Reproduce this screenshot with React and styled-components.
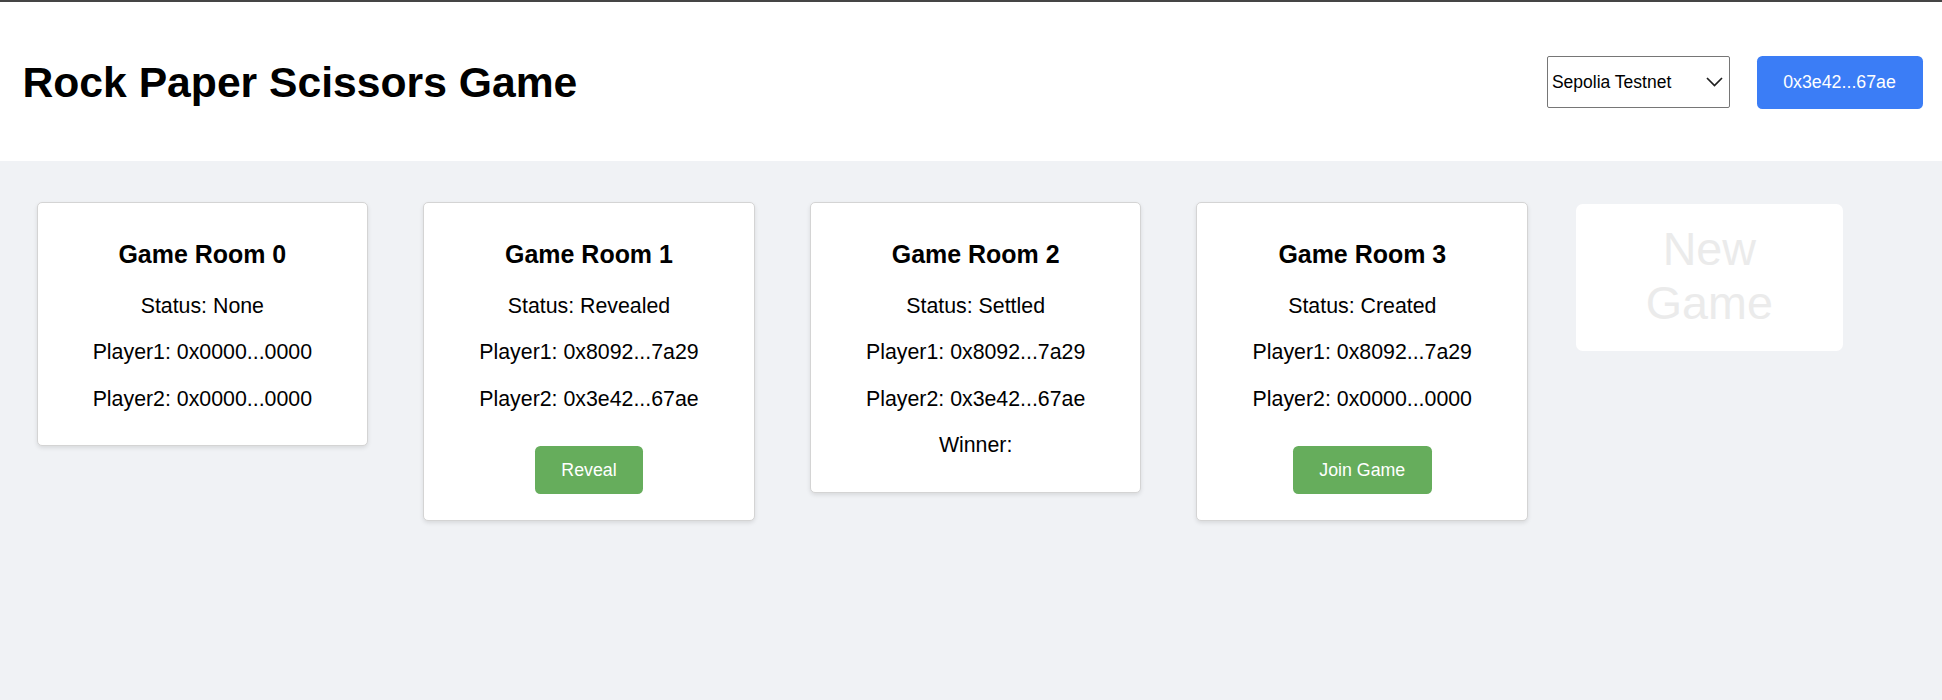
import styled, { createGlobalStyle } from "styled-components";

const GlobalStyle = createGlobalStyle`
  body {
    margin: 0;
    font-family: "Liberation Sans", Arial, sans-serif;
    background: #f0f2f5;
  }
`;

const Page = styled.div`
  min-height: 100vh;
  border-top: 2px solid #454545;
  box-sizing: border-box;
  background: #f0f2f5;
`;

const Header = styled.header`
  display: flex;
  justify-content: space-between;
  align-items: center;
  padding: 27px 19.5px 26px 22.5px;
  background: #ffffff;
`;

const Title = styled.h1`
  margin: 28.6px 0;
  font-size: 42.67px;
  font-weight: bold;
  color: #000000;
`;

const Controls = styled.div`
  display: flex;
  align-items: center;
  gap: 26.67px;
`;

const SelectBox = styled.div`
  position: relative;
  width: 183px;
  height: 52px;
`;

const NetworkSelect = styled.select`
  appearance: none;
  width: 100%;
  height: 100%;
  box-sizing: border-box;
  padding: 0 0 0 4px;
  border: 1px solid #767676;
  border-radius: 2px;
  background: #ffffff;
  color: #000000;
  font-family: "Liberation Sans", Arial, sans-serif;
  font-size: 17.5px;
`;

const Chevron = styled.svg`
  position: absolute;
  top: 21px;
  right: 7px;
  pointer-events: none;
`;

const WalletButton = styled.button`
  height: 53px;
  padding: 0 26.67px;
  border: none;
  border-radius: 5.33px;
  background: #3b7df6;
  color: #ffffff;
  font-family: "Liberation Sans", Arial, sans-serif;
  font-size: 17.78px;
`;

const Rooms = styled.main`
  display: flex;
  align-items: flex-start;
  gap: 55px;
  padding: 40.5px 0 0 36.5px;
`;

const Card = styled.div`
  width: 331.67px;
  box-sizing: border-box;
  padding: 12.4px;
  border: 1px solid #d4d4d4;
  border-radius: 5px;
  background: #ffffff;
  box-shadow: 0 2px 4px rgba(0, 0, 0, 0.1);
  text-align: center;
  color: #000000;
`;

const RoomTitle = styled.h3`
  margin: 25px 0;
  font-size: 24.96px;
  font-weight: bold;
`;

const Info = styled.p`
  margin: 21.33px 0;
  font-size: 21.33px;
`;

const Actions = styled.div`
  display: flex;
  justify-content: center;
  padding: 13.33px 0;
`;

const ActionButton = styled.button`
  padding: 13.33px 26.67px;
  border: none;
  border-radius: 5.33px;
  background: #66ad5c;
  color: #ffffff;
  font-family: "Liberation Sans", Arial, sans-serif;
  font-size: 17.78px;
`;

const NewGameButton = styled.button`
  width: 267px;
  margin: 2px 0 0 -7.3px;
  padding: 18px 20px 21px;
  border: none;
  border-radius: 6.67px;
  background: #ffffff;
  color: #ebebeb;
  font-family: "Liberation Sans", Arial, sans-serif;
  font-size: 46.67px;
  line-height: normal;
`;

const rooms = [
  { id: 0, status: "None", player1: "0x0000...0000", player2: "0x0000...0000" },
  { id: 1, status: "Revealed", player1: "0x8092...7a29", player2: "0x3e42...67ae", action: "Reveal" },
  { id: 2, status: "Settled", player1: "0x8092...7a29", player2: "0x3e42...67ae", winner: "" },
  { id: 3, status: "Created", player1: "0x8092...7a29", player2: "0x0000...0000", action: "Join Game" },
];

function GameRoom({ room }) {
  const { id, status, player1, player2, action, winner } = room;

  return (
    <Card>
      <RoomTitle>Game Room {id}</RoomTitle>
      <Info>Status: {status}</Info>
      <Info>Player1: {player1}</Info>
      <Info>Player2: {player2}</Info>
      {winner !== undefined && <Info>Winner: {winner}</Info>}
      {action && (
        <Actions>
          <ActionButton>{action}</ActionButton>
        </Actions>
      )}
    </Card>
  );
}

export default function App() {
  return (
    <>
      <GlobalStyle />
      <Page>
        <Header>
          <Title>Rock Paper Scissors Game</Title>
          <Controls>
            <SelectBox>
              <NetworkSelect defaultValue="sepolia">
                <option value="sepolia">Sepolia Testnet</option>
                <option value="mainnet">Ethereum Mainnet</option>
              </NetworkSelect>
              <Chevron width="17" height="10" viewBox="0 0 17 10">
                <path d="M1 1 L8.5 8.5 L16 1" fill="none" stroke="#1f1f1f" strokeWidth="1.7" />
              </Chevron>
            </SelectBox>
            <WalletButton>0x3e42...67ae</WalletButton>
          </Controls>
        </Header>
        <Rooms>
          {rooms.map((room) => (
            <GameRoom key={room.id} room={room} />
          ))}
          <NewGameButton disabled>New Game</NewGameButton>
        </Rooms>
      </Page>
    </>
  );
}
